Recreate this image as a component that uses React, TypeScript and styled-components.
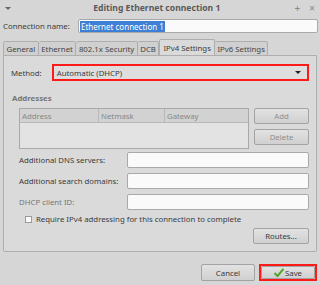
import React from "react";
import styled, { createGlobalStyle } from "styled-components";

const Global = createGlobalStyle`
  html, body { margin: 0; padding: 0; overflow: hidden; }
  body { font-family: "Noto Sans", "Open Sans", sans-serif; font-size: 7.8px; color: #3a3a3a; }
  * { box-sizing: border-box; }
`;

const Window = styled.div`
  width: 320px;
  height: 285px;
  background: #d6d6d6;
  display: flex;
  flex-direction: column;
`;

const TitleBar = styled.div`
  height: 16px;
  display: flex;
  align-items: center;
  padding: 0 4px 0 4px;
  color: #5a5a5a;
`;

const MenuArrow = styled.span`
  width: 0;
  height: 0;
  border-left: 3px solid transparent;
  border-right: 3px solid transparent;
  border-top: 3px solid #666;
  margin-left: 1px;
`;

const Title = styled.div`
  flex: 1;
  text-align: center;
  font-weight: bold;
  font-size: 8.6px;
  padding-left: 8px;
`;

const TitleButtons = styled.div`
  display: flex;
  gap: 9px;
  font-size: 10px;
  color: #888;
  padding-right: 1px;
`;

const NameRow = styled.div`
  display: flex;
  align-items: center;
  margin-top: 3px;
  height: 14px;
  padding: 0 2px 0 3px;
`;

const Label = styled.span<{ $disabled?: boolean; $w?: number }>`
  color: ${(p) => (p.$disabled ? "#777" : "#3a3a3a")};
  white-space: nowrap;
  ${(p) => (p.$w ? `width: ${p.$w}px; flex: none;` : "")}
`;

const TextInput = styled.div<{ $h?: number }>`
  flex: 1;
  height: ${(p) => p.$h ?? 15}px;
  background: #fafafa;
  border: 1px solid #a9a9a9;
  border-radius: 2px;
  display: flex;
  align-items: center;
  padding-left: 1px;
`;

const Selected = styled.span`
  background: #3c7fd5;
  color: #fff;
  padding: 0 1px;
  line-height: 11px;
  font-size: 8px;
`;

const TabStrip = styled.div`
  display: flex;
  align-items: flex-end;
  margin-top: 6px;
  height: 17px;
  padding-left: 3px;
`;

const Tab = styled.div<{ $active?: boolean }>`
  height: ${(p) => (p.$active ? 17 : 15)}px;
  padding: 0 ${(p) => (p.$active ? 3 : 2.5)}px;
  display: flex;
  align-items: center;
  border: 1px solid #aeaeae;
  border-bottom: ${(p) => (p.$active ? "none" : "1px solid #aeaeae")};
  border-left: ${(p) => (p.$active ? "1px solid #aeaeae" : "none")};
  background: ${(p) => (p.$active ? "#dadada" : "#d0d0d0")};
  border-radius: 2px 2px 0 0;
  color: ${(p) => (p.$active ? "#3a3a3a" : "#444")};
  &:first-child { border-left: 1px solid #aeaeae; }
`;

const Panel = styled.div`
  margin: -1px 3px 0 3px;
  height: 197px;
  border: 1px solid #aeaeae;
  border-radius: 0 0 2px 2px;
  background: #dadada;
  padding: 7px 7px 0 7px;
  display: flex;
  flex-direction: column;
`;

const FormRow = styled.div<{ $mt?: number; $indent?: number }>`
  display: flex;
  align-items: center;
  margin-top: ${(p) => p.$mt ?? 0}px;
  padding-left: ${(p) => p.$indent ?? 0}px;
`;

const Combo = styled.div`
  flex: 1;
  height: 17px;
  margin-left: 10px;
  border: 2px solid #ff1a1a;
  background: #dedede;
  display: flex;
  align-items: center;
  justify-content: space-between;
  padding: 0 6px 0 3px;
`;

const ComboArrow = styled.span`
  width: 0;
  height: 0;
  border-left: 3px solid transparent;
  border-right: 3px solid transparent;
  border-top: 3px solid #222;
`;

const SectionTitle = styled.div`
  margin-top: 12px;
  font-weight: bold;
  color: #777;
  padding-left: 1px;
  line-height: 11px;
`;

const AddrArea = styled.div`
  display: flex;
  margin-top: 4px;
  padding-left: 8px;
  gap: 5px;
`;

const Table = styled.div`
  width: 230px;
  height: 41px;
  border: 1px solid #a9a9a9;
  background: #e3e3e3;
  display: flex;
  flex-direction: column;
`;

const TableHead = styled.div`
  display: grid;
  grid-template-columns: 79px 66px 1fr;
  height: 14px;
  background: #d2d2d2;
  border-bottom: 1px solid #b8b8b8;
`;

const HeadCell = styled.div`
  color: #888;
  padding-left: 2px;
  display: flex;
  align-items: center;
  border-right: 1px solid #b8b8b8;
  &:last-child { border-right: none; }
`;

const SideButtons = styled.div`
  display: flex;
  flex-direction: column;
  gap: 5px;
`;

const Button = styled.div<{ $w: number; $disabled?: boolean; $h?: number }>`
  width: ${(p) => p.$w}px;
  height: ${(p) => p.$h ?? 16}px;
  border: 1px solid #a3a3a3;
  border-radius: 2px;
  background: linear-gradient(#e2e2e2, #d0d0d0);
  color: ${(p) => (p.$disabled ? "#8e8e8e" : "#3a3a3a")};
  display: flex;
  align-items: center;
  justify-content: center;
  gap: 1px;
`;

const FieldInput = styled.div`
  width: 182px;
  height: 16px;
  margin-left: auto;
  background: #fafafa;
  border: 1px solid #a9a9a9;
  border-radius: 2px;
`;

const Fields = styled.div`
  display: flex;
  flex-direction: column;
  gap: 5px;
  margin-top: 3px;
  padding-left: 8px;
`;

const Check = styled.span`
  width: 7px;
  height: 7px;
  background: #fafafa;
  border: 1px solid #9a9a9a;
  margin-right: 4px;
`;

const RoutesRow = styled.div`
  display: flex;
  justify-content: flex-end;
  margin-top: 4px;
`;

const Footer = styled.div`
  display: flex;
  justify-content: flex-end;
  gap: 4px;
  margin-top: 12px;
  padding-right: 3px;
`;

const Highlight = styled.div`
  border: 2px solid #ff1a1a;
  display: flex;
`;

const CheckIcon = () => (
  <svg width="10" height="9" viewBox="0 0 10 9">
    <path d="M0.5 5 L3.5 8 L9.5 0.8" stroke="#4fa52a" strokeWidth="2" fill="none" strokeLinejoin="round" />
  </svg>
);

export default function App() {
  return (
    <Window>
      <Global />
      <TitleBar>
        <MenuArrow />
        <Title>Editing Ethernet connection 1</Title>
        <TitleButtons>
          <span>+</span>
          <span>×</span>
        </TitleButtons>
      </TitleBar>
      <NameRow>
        <Label $w={75}>Connection name:</Label>
        <TextInput $h={14}>
          <Selected>Ethernet connection 1</Selected>
        </TextInput>
      </NameRow>
      <TabStrip>
        <Tab>General</Tab>
        <Tab>Ethernet</Tab>
        <Tab>802.1x Security</Tab>
        <Tab>DCB</Tab>
        <Tab $active>IPv4 Settings</Tab>
        <Tab>IPv6 Settings</Tab>
      </TabStrip>
      <Panel>
        <FormRow $mt={1}>
          <Label>Method:</Label>
          <Combo>
            <span>Automatic (DHCP)</span>
            <ComboArrow />
          </Combo>
        </FormRow>
        <SectionTitle>Addresses</SectionTitle>
        <AddrArea>
          <Table>
            <TableHead>
              <HeadCell>Address</HeadCell>
              <HeadCell>Netmask</HeadCell>
              <HeadCell>Gateway</HeadCell>
            </TableHead>
          </Table>
          <SideButtons>
            <Button $w={55} $disabled>Add</Button>
            <Button $w={55} $disabled>Delete</Button>
          </SideButtons>
        </AddrArea>
        <Fields>
          <FormRow>
            <Label>Additional DNS servers:</Label>
            <FieldInput />
          </FormRow>
          <FormRow>
            <Label>Additional search domains:</Label>
            <FieldInput />
          </FormRow>
          <FormRow>
            <Label $disabled>DHCP client ID:</Label>
            <FieldInput />
          </FormRow>
        </Fields>
        <FormRow $mt={4} $indent={14}>
          <Check />
          <Label>Require IPv4 addressing for this connection to complete</Label>
        </FormRow>
        <RoutesRow>
          <Button $w={56}>Routes...</Button>
        </RoutesRow>
      </Panel>
      <Footer>
        <Button $w={54} $h={17}>Cancel</Button>
        <Highlight>
          <Button $w={54} $h={13}>
            <CheckIcon />
            Save
          </Button>
        </Highlight>
      </Footer>
    </Window>
  );
}
